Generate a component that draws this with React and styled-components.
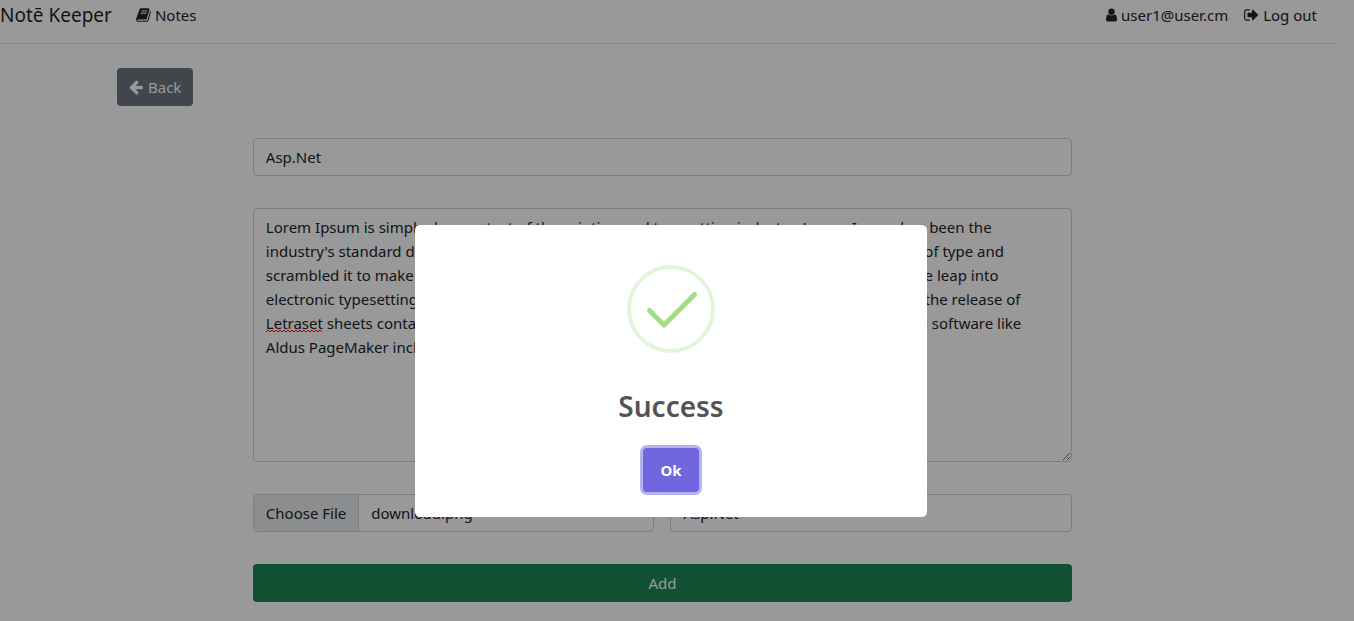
import React from "react";
import styled, { createGlobalStyle } from "styled-components";

const GlobalStyle = createGlobalStyle`
  *, *::before, *::after { box-sizing: border-box; }
  body {
    margin: 0;
    background: #fff;
    color: #212529;
    font-family: "Noto Sans", "Open Sans", sans-serif;
    font-size: 15px;
    line-height: 24px;
    overflow: hidden;
  }
  button, input, textarea { font: inherit; color: inherit; }
`;

const Page = styled.div`
  padding-right: 17px;
`;

const Navbar = styled.header`
  display: flex;
  align-items: center;
  justify-content: space-between;
  height: 44px;
  padding: 0 20px 13px 0;
  border-bottom: 1px solid #dee2e6;
`;

const NavGroup = styled.nav`
  display: flex;
  align-items: center;
  gap: 16px;
`;

const Brand = styled.a`
  margin-right: 8px;
  color: rgba(0, 0, 0, 0.9);
  font-size: 19px;
  line-height: 30px;
  text-decoration: none;
`;

const NavLink = styled.a`
  display: flex;
  align-items: center;
  gap: 4px;
  color: #212529;
  text-decoration: none;
`;

const Glyph = styled.svg`
  height: 16px;
  width: ${(p) => p.$width}px;
  fill: currentColor;
`;

const Main = styled.main`
  padding: 24px 42px 19px 30px;
`;

const BackBar = styled.div`
  padding-left: 87px;
  margin-bottom: 32px;
`;

const Button = styled.button`
  display: flex;
  align-items: center;
  justify-content: center;
  gap: 4px;
  width: ${(p) => (p.$block ? "100%" : "auto")};
  padding: 6px 11px;
  border: 1px solid transparent;
  border-radius: 4px;
  background: ${(p) => (p.$variant === "success" ? "#198754" : "#6c757d")};
  color: #fff;
`;

const FormRow = styled.div`
  display: grid;
  grid-template-columns: 1fr 4fr 1fr;
`;

const Form = styled.form`
  grid-column: 2;
  display: flex;
  flex-direction: column;
  gap: 32px;
  padding: 0 12px;
`;

const Field = styled.input`
  width: 100%;
  height: 38px;
  padding: 6px 12px;
  border: 1px solid #ced4da;
  border-radius: 4px;
  background: #fff;
`;

const TextAreaWrap = styled.div`
  position: relative;
  display: flex;
`;

const TextArea = styled.textarea`
  width: 100%;
  height: 254px;
  padding: 6px 12px;
  border: 1px solid #ced4da;
  border-radius: 4px;
  background: #fff;
  resize: vertical;
`;

const Misspelling = styled.svg`
  position: absolute;
  top: 121px;
  left: 13px;
  width: 56px;
  height: 4px;
  pointer-events: none;
`;

const Columns = styled.div`
  display: grid;
  grid-template-columns: 1fr 1fr;
  gap: 16px;
`;

const FilePicker = styled.label`
  display: flex;
  height: 38px;
  border: 1px solid #ced4da;
  border-radius: 4px;
  overflow: hidden;
`;

const FileInput = styled.input`
  position: absolute;
  width: 1px;
  height: 1px;
  opacity: 0;
`;

const FileButton = styled.span`
  padding: 6px 12px;
  border-right: 1px solid #ced4da;
  background: #e9ecef;
`;

const FileName = styled.span`
  padding: 6px 12px;
`;

const Overlay = styled.div`
  position: fixed;
  inset: 0;
  display: flex;
  align-items: flex-start;
  justify-content: center;
  padding: 225px 12px 0 0;
  background: rgba(0, 0, 0, 0.4);
`;

const Modal = styled.div`
  display: flex;
  flex-direction: column;
  align-items: center;
  width: 512px;
  max-width: 100%;
  padding: 40px 20px 25px;
  border-radius: 5px;
  background: #fff;
`;

const SuccessIcon = styled.svg`
  width: 88px;
  height: 88px;
  fill: none;
`;

const Title = styled.h2`
  margin: 35px 0 24px;
  color: #545454;
  font-size: 28px;
  font-weight: 600;
  line-height: 36px;
`;

const OkButton = styled.button`
  width: 56px;
  height: 44px;
  padding: 0;
  border: 0;
  border-radius: 4px;
  background: #7066e0;
  box-shadow: 0 0 0 3px rgba(112, 102, 224, 0.5);
  color: #fff;
  font-weight: 700;
`;

const icons = {
  book: [1664, "M1639 478q40 57 18 129l-275 906q-19 64-76.5 107.5t-122.5 43.5h-923q-77 0-148.5-53.5t-99.5-131.5q-24-67-2-127 0-4 3-27t4-37q1-8-3-21.5t-3-19.5q2-11 8-21t16.5-23.5 16.5-23.5q23-38 45-91.5t30-91.5q3-10 .5-30t-.5-28q3-11 17-28t17-23q21-36 42-92t25-90q1-9-2.5-32t.5-28q4-13 22-30.5t22-22.5q19-26 42.5-84.5t27.5-96.5q1-8-3-25.5t-2-26.5q2-8 9-18t18-23 17-21q8-12 16.5-30.5t15-35 16-36 19.5-32 26.5-23.5 36-11.5 47.5 5.5l-1 3q38-9 51-9h761q74 0 114 56t18 130l-274 906q-36 119-71.5 153.5t-128.5 34.5h-869q-27 0-38 15-11 16-1 43 24 70 144 70h923q29 0 56-15.5t35-41.5l300-987q7-22 5-57 38 15 59 43zm-1064 2q-4 13 2 22.5t20 9.5h608q13 0 25.5-9.5t16.5-22.5l21-64q4-13-2-22.5t-20-9.5h-608q-13 0-25.5 9.5t-16.5 22.5zm-83 256q-4 13 2 22.5t20 9.5h608q13 0 25.5-9.5t16.5-22.5l21-64q4-13-2-22.5t-20-9.5h-608q-13 0-25.5 9.5t-16.5 22.5z"],
  user: [1280, "M1280 1399q0 109-62.5 187t-150.5 78h-854q-88 0-150.5-78t-62.5-187q0-85 8.5-160.5t31.5-152 58.5-131 94-89 134.5-34.5q131 128 313 128t313-128q76 0 134.5 34.5t94 89 58.5 131 31.5 152 8.5 160.5zm-256-887q0 159-112.5 271.5t-271.5 112.5-271.5-112.5-112.5-271.5 112.5-271.5 271.5-112.5 271.5 112.5 112.5 271.5z"],
  signOut: [1664, "M640 1440q0 4 1 20t.5 26.5-3 23.5-10 19.5-20.5 6.5h-320q-119 0-203.5-84.5t-84.5-203.5v-704q0-119 84.5-203.5t203.5-84.5h320q13 0 22.5 9.5t9.5 22.5q0 4 1 20t.5 26.5-3 23.5-10 19.5-20.5 6.5h-320q-66 0-113 47t-47 113v704q0 66 47 113t113 47h312l11.5 1 11.5 3 8 5.5 7 9 2 13.5zm928-544q0 26-19 45l-544 544q-19 19-45 19t-45-19-19-45v-288h-448q-26 0-45-19t-19-45v-384q0-26 19-45t45-19h448v-288q0-26 19-45t45-19 45 19l544 544q19 19 19 45z"],
  arrowLeft: [1664, "M1536 896v128q0 53-32.5 90.5t-84.5 37.5h-704l293 294q38 36 38 90t-38 90l-75 76q-37 37-90 37-52 0-91-37l-651-652q-37-37-37-90 0-52 37-91l651-650q38-38 91-38 52 0 90 38l75 74q38 38 38 91t-38 91l-293 293h704q52 0 84.5 37.5t32.5 90.5z"],
};

function Icon({ name }) {
  const [width, path] = icons[name];
  return (
    <Glyph $width={Math.round(width / 112)} viewBox={`0 0 ${width} 1792`} aria-hidden="true">
      <path d={path} />
    </Glyph>
  );
}

const noteText = [
  "Lorem Ipsum is simply dummy text of the printing and typesetting industry. Lorem Ipsum has been the",
  "industry's standard dummy text ever since the 1500s, when an unknown printer took a galley of type and",
  "scrambled it to make a type specimen book. It has survived not only five centuries, but also the leap into",
  "electronic typesetting, remaining essentially unchanged. It was popularised in the 1960s with the release of",
  "Letraset sheets containing Lorem Ipsum passages, and more recently with desktop publishing software like",
  "Aldus PageMaker including versions of Lorem Ipsum.",
].join("\n");

export default function App() {
  return (
    <>
      <GlobalStyle />
      <Page>
        <Navbar>
          <NavGroup>
            <Brand href="#home">Notē Keeper</Brand>
            <NavLink href="#notes"><Icon name="book" />Notes</NavLink>
          </NavGroup>
          <NavGroup>
            <NavLink href="#profile"><Icon name="user" />user1@user.cm</NavLink>
            <NavLink href="#logout"><Icon name="signOut" />Log out</NavLink>
          </NavGroup>
        </Navbar>
        <Main>
          <BackBar>
            <Button type="button"><Icon name="arrowLeft" />Back</Button>
          </BackBar>
          <FormRow>
            <Form onSubmit={(e) => e.preventDefault()}>
              <Field aria-label="Title" defaultValue="Asp.Net" />
              <TextAreaWrap>
                <TextArea aria-label="Description" spellCheck={false} defaultValue={noteText} />
                <Misspelling viewBox="0 0 56 4" aria-hidden="true">
                  <path
                    d={"M0 3" + Array.from({ length: 14 }, () => "l2 -2l2 2").join("")}
                    fill="none"
                    stroke="#f00"
                  />
                </Misspelling>
              </TextAreaWrap>
              <Columns>
                <FilePicker>
                  <FileInput type="file" />
                  <FileButton>Choose File</FileButton>
                  <FileName>download.png</FileName>
                </FilePicker>
                <Field aria-label="Category" defaultValue="Asp.Net" />
              </Columns>
              <Button type="submit" $block $variant="success">Add</Button>
            </Form>
          </FormRow>
        </Main>
      </Page>
      <Overlay>
        <Modal role="dialog" aria-modal="true" aria-labelledby="dialog-title">
          <SuccessIcon viewBox="0 0 88 88" aria-hidden="true">
            <circle cx="44" cy="44" r="42" stroke="#a5dc86" strokeOpacity="0.3" strokeWidth="4" />
            <path d="M22.5 45.5L37 60L67.5 29.5" stroke="#a5dc86" strokeWidth="5" strokeLinecap="round" strokeLinejoin="round" />
          </SuccessIcon>
          <Title id="dialog-title">Success</Title>
          <OkButton type="button">Ok</OkButton>
        </Modal>
      </Overlay>
    </>
  );
}
